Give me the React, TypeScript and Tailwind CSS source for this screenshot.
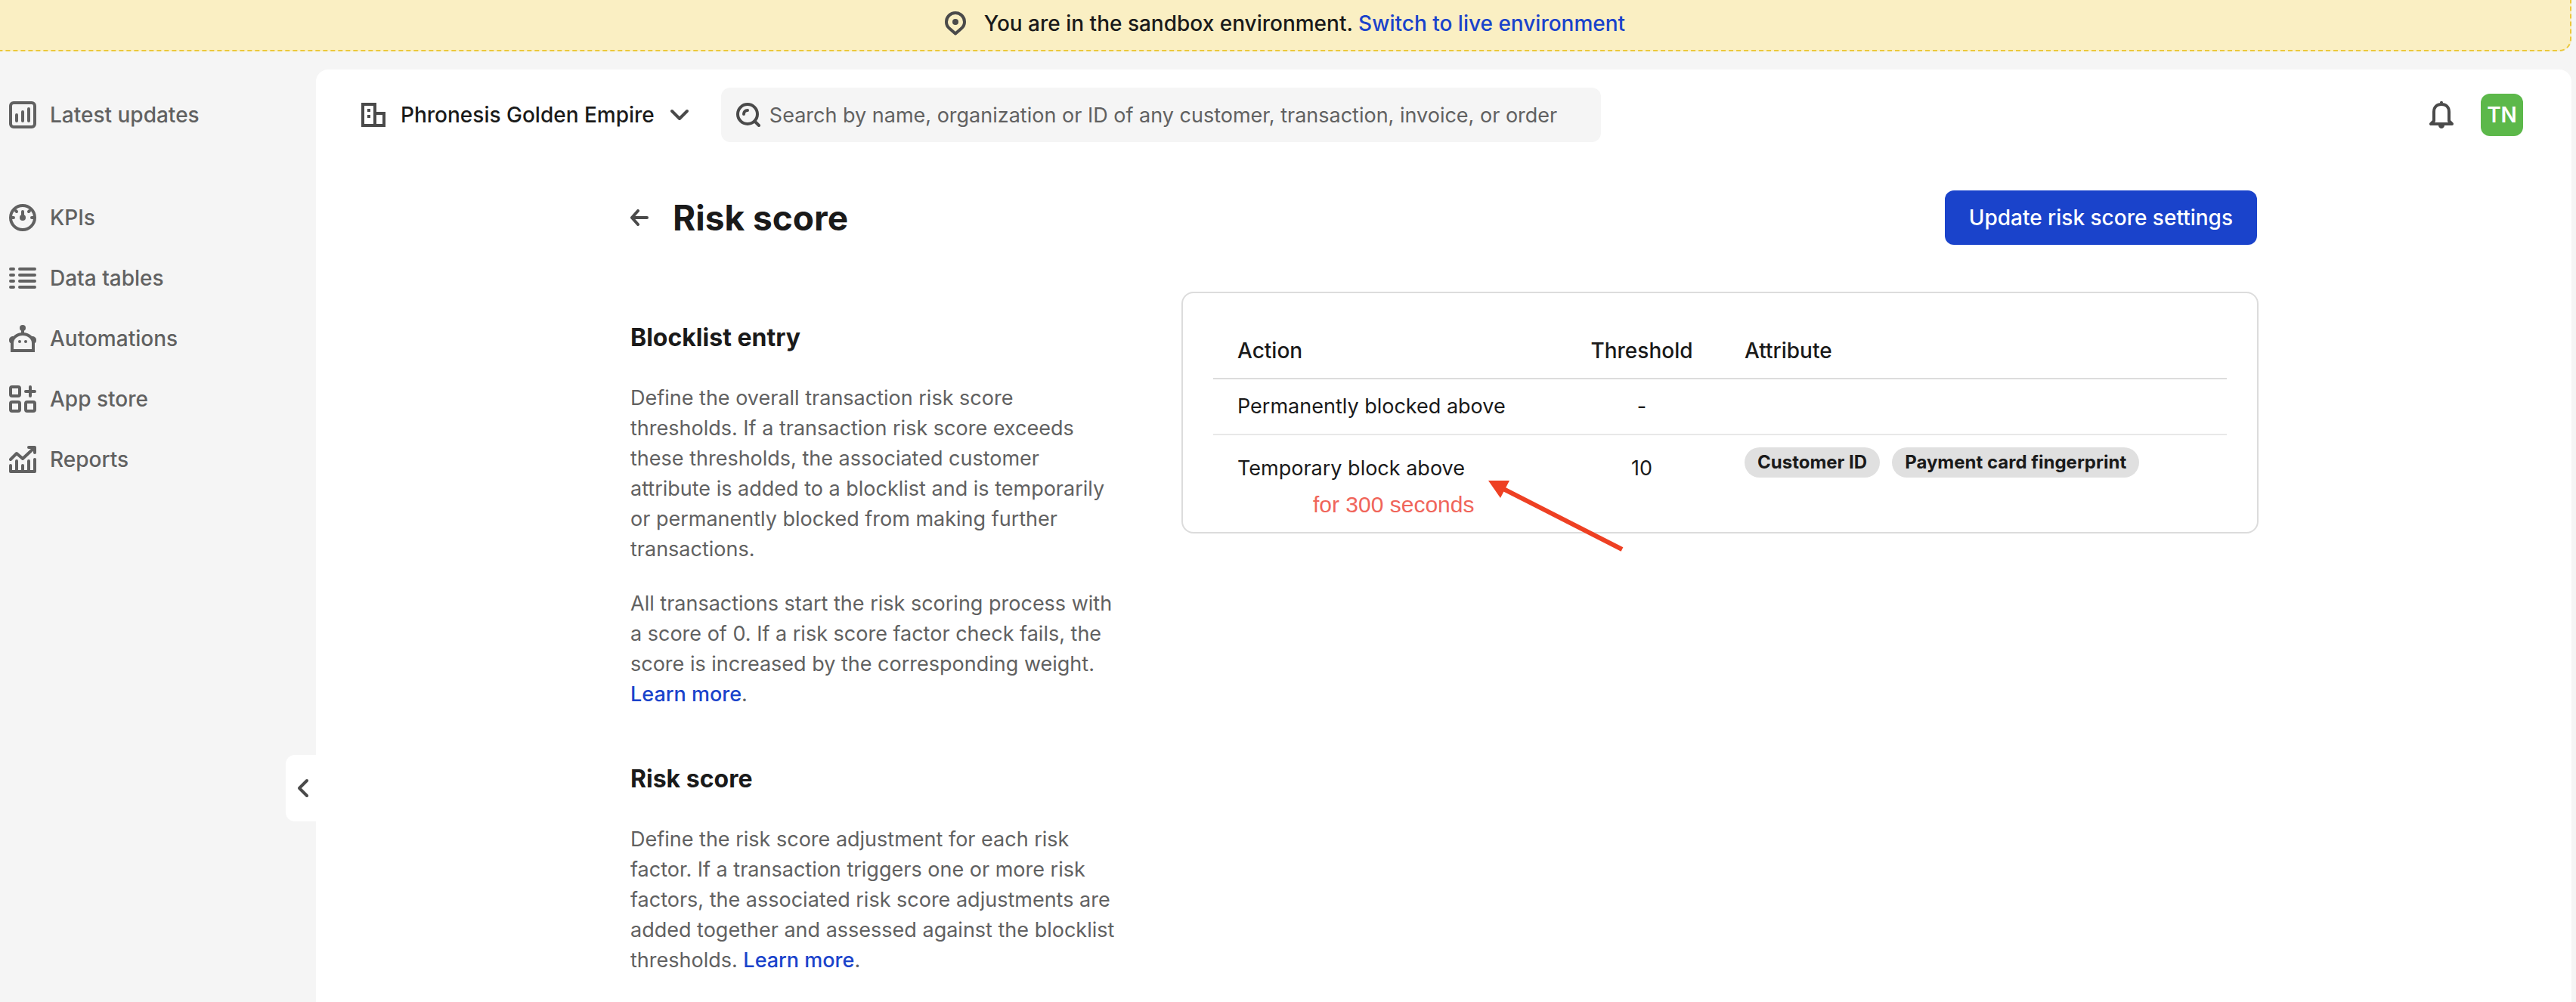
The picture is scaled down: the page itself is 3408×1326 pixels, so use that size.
import React from "react";

type IconProps = { className?: string };

const stroke = {
  fill: "none",
  stroke: "currentColor",
  strokeWidth: 4,
  strokeLinecap: "round" as const,
  strokeLinejoin: "round" as const,
};

function NavIcon({ children }: { children: React.ReactNode }) {
  return (
    <svg viewBox="0 0 36 36" className="size-9 shrink-0" aria-hidden="true" {...stroke}>
      {children}
    </svg>
  );
}

function UpdatesIcon() {
  return (
    <NavIcon>
      <rect x="2" y="2" width="32" height="32" rx="4" />
      <path d="M10 18v8M18 14v12M26 10v16" />
    </NavIcon>
  );
}

function GaugeIcon() {
  return (
    <NavIcon>
      <circle cx="18" cy="18" r="16" />
      <circle cx="18" cy="18" r="4" fill="currentColor" stroke="none" />
      <path d="M18 18v-8M4 18h2M30 18h2M9 9l1 1M27 9l-1 1" />
    </NavIcon>
  );
}

function ListIcon() {
  return (
    <NavIcon>
      <path d="M2 6h4M14 6h20M2 14h4M14 14h20M2 22h4M14 22h20M2 30h4M14 30h20" />
    </NavIcon>
  );
}

function RobotIcon() {
  return (
    <NavIcon>
      <circle cx="18" cy="4" r="4" fill="currentColor" stroke="none" />
      <path d="M18 6v6" />
      <path d="M4 34V24a14 12 0 0 1 28 0v10z" strokeLinejoin="miter" />
      <path d="M6 15c-4 0-6 2-6 5s1 4 4 5zM30 15c4 0 6 2 6 5s-1 4-4 5z" fill="currentColor" stroke="none" />
      <circle cx="14" cy="22" r="2" fill="currentColor" stroke="none" />
      <circle cx="22" cy="22" r="2" fill="currentColor" stroke="none" />
    </NavIcon>
  );
}

function AppsIcon() {
  return (
    <NavIcon>
      <rect x="2" y="2" width="12" height="12" rx="2" />
      <rect x="2" y="22" width="12" height="12" rx="2" />
      <rect x="22" y="22" width="12" height="12" rx="2" />
      <path d="M28 2v12M22 8h12" />
    </NavIcon>
  );
}

function ReportsIcon() {
  return (
    <NavIcon>
      <path d="M2 18l8-8 8 7L33 3M26 2h8v7" />
      <path d="M2 26v8h32V18M10 20v14M18 26v8M26 20v14" />
    </NavIcon>
  );
}

function BuildingIcon() {
  return (
    <svg viewBox="0 0 32 32" className="size-8 shrink-0" aria-hidden="true" {...stroke} strokeLinejoin="miter">
      <path d="M2 2h16v28H2zM18 14h12v16H18z" />
      <path d="M8 8h4v4H8zM8 16h4v4H8z" fill="currentColor" stroke="none" />
    </svg>
  );
}

function ChevronDown() {
  return (
    <svg viewBox="0 0 26 16" className="h-4 w-[26px] shrink-0" aria-hidden="true" {...stroke}>
      <path d="M3 3l10 10L23 3" />
    </svg>
  );
}

function SearchIcon({ className }: IconProps) {
  return (
    <svg viewBox="0 0 32 32" className={className} aria-hidden="true" {...stroke}>
      <circle cx="15" cy="15" r="13" />
      <path d="M25 25l5 5M10 15c0-3 2-5 5-5" />
    </svg>
  );
}

function PinIcon() {
  return (
    <svg viewBox="0 0 28 32" className="h-8 w-7 shrink-0" aria-hidden="true" {...stroke}>
      <path d="M14 29.500l-8-7C3 20 2 17 2 14a12 12 0 0 1 24 0c0 3-1 6-4 8.500z" />
      <circle cx="14" cy="14" r="4" fill="currentColor" stroke="none" />
    </svg>
  );
}

function BellIcon() {
  return (
    <svg viewBox="0 0 32 36" className="h-9 w-8" aria-hidden="true" {...stroke}>
      <path d="M2 30h28l-4-4V14C26 8 22 4 16 4S6 8 6 14v12z" />
      <path d="M12 32h8c0 2-2 4-4 4s-4-2-4-4zM14 2c0-3 4-3 4 0z" fill="currentColor" stroke="none" />
    </svg>
  );
}

function BackIcon() {
  return (
    <svg viewBox="0 0 24 22" className="h-[22px] w-6" aria-hidden="true" {...stroke}>
      <path d="M2 11h20M10 2L2 11l8 9" />
    </svg>
  );
}

function ChevronLeft() {
  return (
    <svg viewBox="0 0 16 26" className="h-[26px] w-4" aria-hidden="true" {...stroke}>
      <path d="M13 3L3 13l10 10" />
    </svg>
  );
}

const navItems = [
  { label: "KPIs", Icon: GaugeIcon },
  { label: "Data tables", Icon: ListIcon },
  { label: "Automations", Icon: RobotIcon },
  { label: "App store", Icon: AppsIcon },
  { label: "Reports", Icon: ReportsIcon },
];

function NavLink({ label, Icon }: { label: string; Icon: () => React.ReactElement }) {
  return (
    <a href="#" className="flex items-center gap-[18px] pl-3 font-medium text-[#616161]">
      <Icon />
      {label}
    </a>
  );
}

function SandboxBanner() {
  return (
    <div className="mr-[6px] flex h-[68px] items-center justify-center gap-6 rounded-br-2xl border-r-2 border-b-2 border-dashed border-[#ebc83b] bg-[#faefc3] pb-1 font-medium">
      <span className="text-[#4a4a4a]">
        <PinIcon />
      </span>
      <p>
        You are in the sandbox environment.{" "}
        <a href="#" className="text-[#1a43cb]">
          Switch to live environment
        </a>
      </p>
    </div>
  );
}

function Sidebar() {
  return (
    <nav className="w-[418px] shrink-0 pt-[64px]">
      <NavLink label="Latest updates" Icon={UpdatesIcon} />
      <ul className="mt-24 flex flex-col gap-10">
        {navItems.map((item) => (
          <li key={item.label}>
            <NavLink {...item} />
          </li>
        ))}
      </ul>
    </nav>
  );
}

function TopBar() {
  return (
    <header className="flex h-[72px] items-center pr-1">
      <button type="button" className="flex items-center gap-5 font-medium">
        <span className="text-[#4a4a4a]">
          <BuildingIcon />
        </span>
        Phronesis Golden Empire
        <span className="text-[#4a4a4a]">
          <ChevronDown />
        </span>
      </button>
      <label className="ml-[42px] flex h-[72px] w-[1164px] items-center gap-3 rounded-xl bg-[#f5f5f5] px-5">
        <SearchIcon className="size-8 shrink-0 text-[#4a4a4a]" />
        <input
          type="text"
          aria-label="Search"
          placeholder="Search by name, organization or ID of any customer, transaction, invoice, or order"
          className="h-full min-w-0 flex-1 bg-transparent text-[27px] leading-10 outline-none placeholder:text-[#616161]"
        />
      </label>
      <div className="ml-auto flex items-center gap-9">
        <button type="button" aria-label="Notifications" className="text-[#4a4a4a]">
          <BellIcon />
        </button>
        <button type="button" className="size-14 rounded-xl bg-[#5cb84a] font-semibold text-white">
          TN
        </button>
      </div>
    </header>
  );
}

function Description() {
  return (
    <div className="w-[668px] shrink-0 pt-[41px] text-[27px] text-[#616161]">
      <h2 className="text-[32px] leading-10 font-bold text-[#1a1a1a]">Blocklist entry</h2>
      <p className="mt-10">
        Define the overall transaction risk score
        <br />
        thresholds. If a transaction risk score exceeds
        <br />
        these thresholds, the associated customer
        <br />
        attribute is added to a blocklist and is temporarily
        <br />
        or permanently blocked from making further
        <br />
        transactions.
      </p>
      <p className="mt-8">
        All transactions start the risk scoring process with
        <br />a score of 0. If a risk score factor check fails, the
        <br />
        score is increased by the corresponding weight.
        <br />
        <a href="#" className="font-medium text-[#1a43cb]">
          Learn more
        </a>
        .
      </p>
      <h2 className="mt-[72px] text-[32px] leading-10 font-bold text-[#1a1a1a]">Risk score</h2>
      <p className="mt-10">
        Define the risk score adjustment for each risk
        <br />
        factor. If a transaction triggers one or more risk
        <br />
        factors, the associated risk score adjustments are
        <br />
        added together and assessed against the blocklist
        <br />
        thresholds.{" "}
        <a href="#" className="font-medium text-[#1a43cb]">
          Learn more
        </a>
        .
      </p>
    </div>
  );
}

function Tag({ children }: { children: React.ReactNode }) {
  return <span className="rounded-full bg-[#e0e0e0] px-[17px] text-[24px] leading-10 font-bold">{children}</span>;
}

function ThresholdCard() {
  return (
    <section className="relative w-[1425px] rounded-2xl border-2 border-[#dcdcdc] px-10 py-10">
      <table className="w-full table-fixed border-collapse">
        <thead>
          <tr className="border-b-2 border-[#dcdcdc] text-left">
            <th className="w-[463px] px-8 py-4 font-medium">Action</th>
            <th className="w-[208px] px-8 py-4 text-center font-medium">Threshold</th>
            <th className="px-8 py-4 font-medium">Attribute</th>
          </tr>
        </thead>
        <tbody className="text-[27px]">
          <tr className="border-b-2 border-[#e8e8e8]">
            <td className="px-8 py-4">Permanently blocked above</td>
            <td className="px-8 py-4 text-center">-</td>
            <td className="px-8 py-4" />
          </tr>
          <tr>
            <td className="px-8 py-4">Temporary block above</td>
            <td className="px-8 py-4 text-center">10</td>
            <td className="px-8 py-4">
              <div className="mb-4 flex gap-4">
                <Tag>Customer ID</Tag>
                <Tag>Payment card fingerprint</Tag>
              </div>
            </td>
          </tr>
        </tbody>
      </table>
      <span className="absolute top-[260px] left-[172px] font-['Liberation_Sans',sans-serif] text-[30px] text-[#f0655a]">
        for 300 seconds
      </span>
      <svg
        viewBox="0 0 180 96"
        className="absolute top-[248px] left-[404px] h-24 w-[180px] text-[#ee4023]"
        aria-hidden="true"
      >
        <path d="M20 11L177 91" stroke="currentColor" strokeWidth="6" />
        <path d="M0 0h28L16 23z" fill="currentColor" />
      </svg>
    </section>
  );
}

export default function App() {
  return (
    <div className="flex min-h-screen flex-col bg-[#f5f5f5] font-[Inter,sans-serif] text-[28px] leading-10 text-[#1a1a1a]">
      <SandboxBanner />
      <div className="flex flex-1">
        <Sidebar />
        <main className="relative mt-6 mr-[6px] min-w-0 flex-1 rounded-t-2xl bg-white px-[60px] pt-6">
          <button
            type="button"
            aria-label="Collapse navigation"
            className="absolute top-[907px] -left-10 flex h-[88px] w-10 items-center justify-center rounded-l-xl bg-white pl-1.5 text-[#4a4a4a]"
          >
            <ChevronLeft />
          </button>
          <TopBar />
          <div className="mx-auto mt-16 max-w-[2156px]">
            <div className="flex h-[72px] items-center px-[2px]">
              <button type="button" aria-label="Back" className="text-[#4a4a4a]">
                <BackIcon />
              </button>
              <h1 className="ml-8 text-[46px] leading-14 font-bold">Risk score</h1>
              <button
                type="button"
                className="ml-auto h-[72px] rounded-xl bg-[#1a43cb] px-8 font-medium text-white"
              >
                Update risk score settings
              </button>
            </div>
            <div className="mt-[62px] flex items-start justify-between pl-[2px]">
              <Description />
              <ThresholdCard />
            </div>
          </div>
        </main>
      </div>
    </div>
  );
}
